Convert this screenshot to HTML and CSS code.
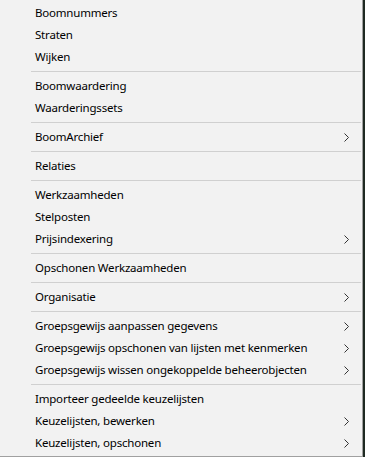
FILE: index.html
```html
<!DOCTYPE html>
<html lang="nl">
<head>
    <meta charset="UTF-8">
    <title>Menu</title>
    <link rel="stylesheet" href="styles.css">
</head>
<body>

<!-- Context menu -->
<div class="menu">
    <div class="item">Boomnummers</div>
    <div class="item">Straten</div>
    <div class="item">Wijken</div>
    <div class="sep"></div>
    <div class="item">Boomwaardering</div>
    <div class="item">Waarderingssets</div>
    <div class="sep"></div>
    <div class="item sub">BoomArchief</div>
    <div class="sep"></div>
    <div class="item">Relaties</div>
    <div class="sep"></div>
    <div class="item">Werkzaamheden</div>
    <div class="item">Stelposten</div>
    <div class="item sub">Prijsindexering</div>
    <div class="sep"></div>
    <div class="item">Opschonen Werkzaamheden</div>
    <div class="sep"></div>
    <div class="item sub">Organisatie</div>
    <div class="sep"></div>
    <div class="item sub">Groepsgewijs aanpassen gegevens</div>
    <div class="item sub">Groepsgewijs opschonen van lijsten met kenmerken</div>
    <div class="item sub">Groepsgewijs wissen ongekoppelde beheerobjecten</div>
    <div class="sep"></div>
    <div class="item">Importeer gedeelde keuzelijsten</div>
    <div class="item sub">Keuzelijsten, bewerken</div>
    <div class="item sub">Keuzelijsten, opschonen</div>
</div>

<script>
    // add the little arrow to items with a submenu
    document.querySelectorAll('.item.sub').forEach(function (el) {
        el.insertAdjacentHTML('beforeend',
            '<svg class="arrow" width="5" height="9" viewBox="0 0 5 9">' +
            '<polyline points="0.5,0.5 4.5,4.5 0.5,8.5" fill="none" stroke="#333" stroke-width="1"/></svg>');
    });
</script>

</body>
</html>
```

FILE: styles.css
```css
body {
    margin: 0;
    padding: 0;
    background-color: #1f2a22;
    font-family: 'Noto Sans', 'Open Sans', sans-serif;
    font-size: 11.5px;
    letter-spacing: -0.2px;
    color: #000;
}

/* Menu box */
.menu {
    width: 362px;
    height: 454px;
    padding: 2px 0 0 0;
    background-color: #f2f2f2;
    border-right: 1px solid #a0a0a0;
    border-bottom: 1px solid #a0a0a0;
    box-sizing: content-box;
}

.item {
    height: 22px;
    line-height: 22px;
    padding-left: 35px;
    position: relative;
    white-space: nowrap;
}

.arrow {
    position: absolute;
    right: 13px;
    top: 7px;
}

.sep {
    height: 7px;
    margin-left: 31px;
    margin-right: 1px;
    box-sizing: border-box;
    border-top: 3px solid transparent;
    border-bottom: 3px solid transparent;
    background-color: #d0d0d0;
    background-clip: content-box;
}
```
